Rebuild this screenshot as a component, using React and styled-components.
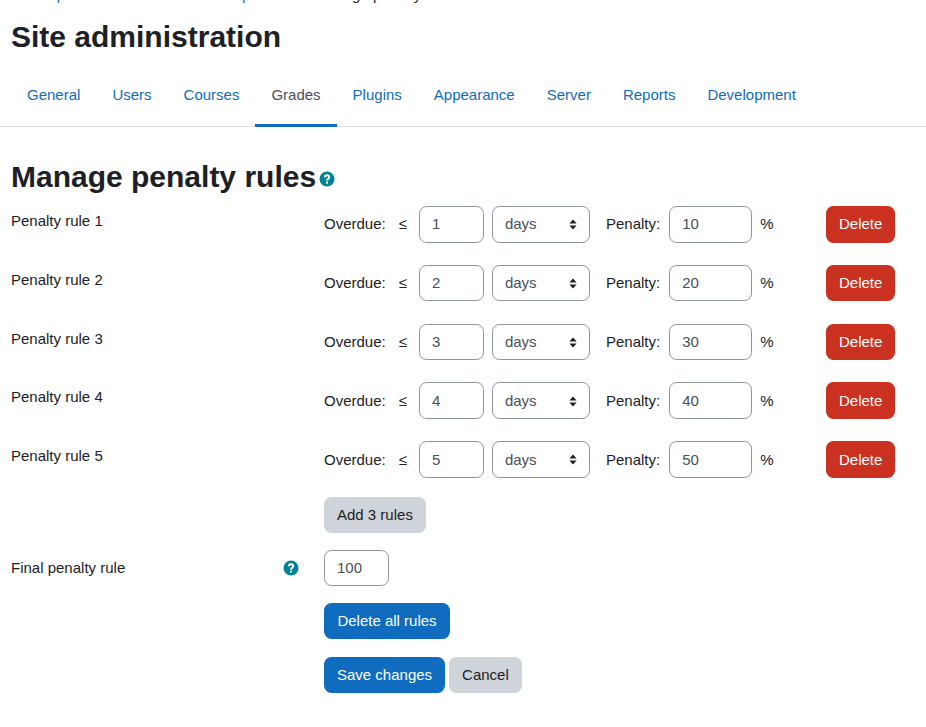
import React from 'react'
import styled, { createGlobalStyle } from 'styled-components'

const GlobalStyle = createGlobalStyle`
  html, body {
    margin: 0;
    background: #fff;
  }
  body {
    font-family: "Liberation Sans", Arial, sans-serif;
    font-size: 15px;
    line-height: 22.5px;
    color: #1d2125;
  }
  * {
    box-sizing: border-box;
  }
`

const StPage = styled.div`
  width: 926px;
  height: 727px;
  overflow: hidden;
`
const StCrumbs = styled.div`
  height: 6px;
  padding-left: 11px;
  display: flex;
  align-items: flex-end;
  white-space: nowrap;
  color: #1d2125;
  a {
    color: #0f6cbf;
  }
`
const StTitle = styled.h1`
  margin: 13px 11px 0;
  font-size: 30px;
  line-height: 36px;
  font-weight: 700;
`
const StTabs = styled.nav`
  display: flex;
  margin-top: 18px;
  padding-left: 11px;
  height: 54px;
  border-bottom: 1px solid #dee2e6;
`
const StTab = styled.a`
  height: 54px;
  padding: 11px 16px 0;
  color: ${p => (p.$active ? '#495057' : '#0f6cbf')};
  border-bottom: 3px solid ${p => (p.$active ? '#0f6cbf' : 'transparent')};
`
const StHeading = styled.h2`
  display: flex;
  align-items: center;
  margin: 32px 11px 0;
  font-size: 30px;
  line-height: 36px;
  font-weight: 700;
`
const StHelp = styled.svg`
  width: 16px;
  height: 16px;
  flex: none;
  margin-left: ${p => p.$gap || 0}px;
  margin-top: ${p => p.$top || 0}px;
`
const StForm = styled.form`
  margin-top: 11px;
  padding: 0 11px;
`
const StRow = styled.div`
  display: flex;
  margin-bottom: ${p => p.$gap}px;
`
const StLabel = styled.div`
  width: 313px;
  flex: none;
  padding: ${p => p.$top}px 25px 0 0;
  display: flex;
  justify-content: space-between;
  align-items: flex-start;
`
const StControls = styled.div`
  display: flex;
  align-items: center;
`
const StText = styled.span`
  margin-right: ${p => p.$gap}px;
  padding-top: 0.8px;
  color: #1d2125;
`
const StInput = styled.div`
  width: ${p => p.$width}px;
  height: 36.5px;
  padding: 6.4px 12px 5.6px;
  border: 1px solid #8f959e;
  border-radius: 7.5px;
  background: #fff;
  color: #495057;
  margin-right: ${p => p.$gap || 0}px;
`
const StSelect = styled(StInput)`
  display: flex;
  align-items: center;
  justify-content: space-between;
  padding-right: 12px;
`
const StCaret = styled.svg`
  width: 8px;
  height: 11px;
`
const StButton = styled.button`
  height: 36.5px;
  min-width: ${p => p.$minWidth || 0}px;
  padding: 0.8px 13px 0;
  border: 0;
  border-radius: 7.5px;
  font: inherit;
  white-space: nowrap;
  background: ${p => ({ danger: '#ca3120', primary: '#0f6cbf', secondary: '#ced4da' }[p.$variant])};
  color: ${p => (p.$variant === 'secondary' ? '#1d2125' : '#fff')};
  margin-left: ${p => p.$left || 0}px;
`

const HelpIcon = props => (
  <StHelp viewBox='0 0 16 16' {...props}>
    <circle cx='8' cy='8' r='7.5' fill='#008196' />
    <path
      d='M5.8 6.2a2.2 2 0 1 1 3.4 1.7c-.8.5-1.2.8-1.2 1.5'
      fill='none'
      stroke='#fff'
      strokeWidth='2'
    />
    <rect x='7' y='10.6' width='2' height='2' fill='#fff' />
  </StHelp>
)

const rules = [1, 2, 3, 4, 5]

const App = () => (
  <StPage>
    <GlobalStyle />
    <StCrumbs>
      <span>
        <a>Grade penalties</a> / <a>Late submission penalties</a> / Manage penalty rules
      </span>
    </StCrumbs>
    <StTitle>Site administration</StTitle>
    <StTabs>
      {['General', 'Users', 'Courses', 'Grades', 'Plugins', 'Appearance', 'Server', 'Reports', 'Development'].map(t => (
        <StTab key={t} $active={t === 'Grades'}>{t}</StTab>
      ))}
    </StTabs>
    <StHeading>
      Manage penalty rules
      <HelpIcon $gap={2.5} $top={3} />
    </StHeading>
    <StForm>
      {rules.map(n => (
        <StRow key={n} $gap={n === 5 ? 19.3 : 22.3}>
          <StLabel $top={4}>Penalty rule {n}</StLabel>
          <StControls>
            <StText $gap={13}>Overdue:</StText>
            <StText $gap={12}>≤</StText>
            <StInput $width={65} $gap={8}>{n}</StInput>
            <StSelect $width={98} $gap={16}>
              days
              <StCaret viewBox='0 0 8 11'>
                <path d='M4 .5 7.6 4.5H.4zM4 10.5.4 6.5h7.2z' fill='#1d2125' />
              </StCaret>
            </StSelect>
            <StText $gap={9}>Penalty:</StText>
            <StInput $width={83} $gap={8}>{n * 10}</StInput>
            <StText $gap={52.5}>%</StText>
            <StButton $variant='danger'>Delete</StButton>
          </StControls>
        </StRow>
      ))}
      <StRow $gap={16.4}>
        <StLabel />
        <StButton $variant='secondary'>Add 3 rules</StButton>
      </StRow>
      <StRow $gap={16.6}>
        <StLabel $top={7}>
          Final penalty rule
          <HelpIcon $top={3.5} />
        </StLabel>
        <StInput $width={65}>100</StInput>
      </StRow>
      <StRow $gap={17.5}>
        <StLabel />
        <StButton $variant='primary' $minWidth={126}>Delete all rules</StButton>
      </StRow>
      <StRow $gap={0}>
        <StLabel />
        <StButton $variant='primary'>Save changes</StButton>
        <StButton $variant='secondary' $left={4}>Cancel</StButton>
      </StRow>
    </StForm>
  </StPage>
)

export default App
